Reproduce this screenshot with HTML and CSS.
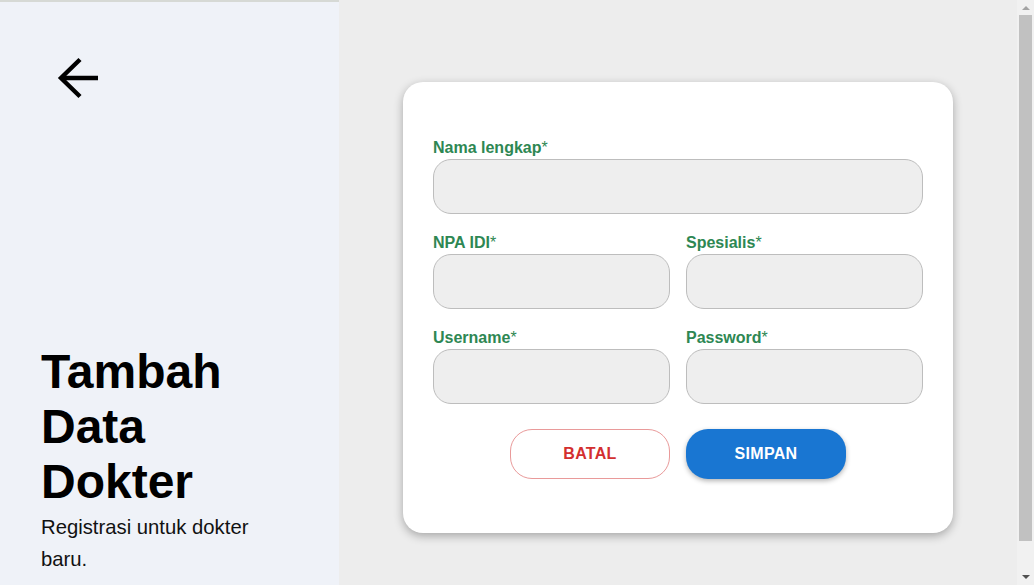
FILE: index.html
```html
<!DOCTYPE html>
<html lang="id">
<head>
<meta charset="utf-8">
<title>Tambah Data Dokter</title>
<link rel="stylesheet" href="styles.css">
</head>
<body>
<div class="page">
  <aside class="side">
    <button class="back" aria-label="Kembali">
      <svg width="44" height="42" viewBox="0 0 44 42" fill="none" stroke="#000" stroke-width="4.4" stroke-linejoin="miter">
        <path d="M42 21H5"/>
        <path d="M24 2.5L5 21L24 39.5"/>
      </svg>
    </button>
    <div class="intro">
      <h1 class="title">Tambah Data Dokter</h1>
      <p class="subtitle">Registrasi untuk dokter baru.</p>
    </div>
  </aside>
  <main class="main">
    <form class="card">
      <div class="grid">
        <div class="field wide">
          <label class="label">Nama lengkap<span class="req">*</span></label>
          <input class="input" type="text">
        </div>
        <div class="field">
          <label class="label">NPA IDI<span class="req">*</span></label>
          <input class="input" type="text">
        </div>
        <div class="field">
          <label class="label">Spesialis<span class="req">*</span></label>
          <input class="input" type="text">
        </div>
        <div class="field">
          <label class="label">Username<span class="req">*</span></label>
          <input class="input" type="text">
        </div>
        <div class="field">
          <label class="label">Password<span class="req">*</span></label>
          <input class="input" type="password">
        </div>
      </div>
      <div class="actions">
        <button type="button" class="btn btn-cancel">BATAL</button>
        <button type="button" class="btn btn-save">SIMPAN</button>
      </div>
    </form>
  </main>
  <div class="scrollbar">
    <div class="sb-up"><span class="tri-up"></span></div>
    <div class="sb-thumb"></div>
    <div class="sb-space"></div>
    <div class="sb-down"><span class="tri-down"></span></div>
  </div>
</div>
</body>
</html>
```

FILE: styles.css
```css
* { box-sizing: border-box; }
html, body { margin: 0; padding: 0; }
body {
  font-family: "Liberation Sans", Arial, sans-serif;
  color: #000;
  overflow: hidden;
}
.page {
  display: flex;
  height: 585px;
}
.side {
  width: 339px;
  flex: none;
  background: #eff2f8;
  border-top: 2px solid #d6d9d5;
  display: flex;
  flex-direction: column;
  justify-content: space-between;
  padding: 55px 40px 10px 41px;
}
.back {
  border: 0;
  background: none;
  padding: 0;
  margin-left: 15px;
  width: 44px;
  height: 42px;
  cursor: pointer;
}
.back svg { display: block; }
.intro { width: 240px; }
.title {
  margin: 0 0 2px;
  font-size: 48px;
  line-height: 55px;
  font-weight: 700;
}
.subtitle {
  margin: 0;
  font-size: 20.3px;
  line-height: 32px;
  color: #111;
}
.main {
  flex: 1;
  background: #ededed;
  display: flex;
  justify-content: center;
  align-items: flex-start;
  padding-top: 82px;
}
.card {
  width: 550px;
  background: #fff;
  border-radius: 20px;
  box-shadow: 0 3px 10px rgba(0, 0, 0, 0.3);
  padding: 55px 30px 54px;
}
.grid {
  display: grid;
  grid-template-columns: minmax(0, 1fr) minmax(0, 1fr);
  column-gap: 16px;
  row-gap: 18px;
}
.field { display: flex; flex-direction: column; min-width: 0; }
.field.wide { grid-column: 1 / 3; }
.label {
  font-size: 16px;
  line-height: 22px;
  font-weight: 700;
  color: #2e8753;
}
.req { font-weight: 400; }
.input {
  width: 100%;
  min-width: 0;
  height: 55px;
  border: 1px solid #bdbdbd;
  border-radius: 18px;
  background: #eeeeee;
  font: inherit;
  padding: 0 16px;
  outline: none;
}
.actions {
  display: flex;
  justify-content: center;
  gap: 16px;
  margin-top: 25px;
}
.btn {
  width: 160px;
  height: 50px;
  border-radius: 22px;
  font-family: "Liberation Sans", Arial, sans-serif;
  font-size: 16px;
  font-weight: 700;
  letter-spacing: 0.3px;
  cursor: pointer;
}
.btn-cancel {
  background: #fff;
  border: 1px solid #e99a9a;
  color: #d32f2f;
}
.btn-save {
  background: #1976d2;
  border: 0;
  color: #fff;
  box-shadow: 0 2px 5px rgba(0, 0, 0, 0.3);
}
.scrollbar {
  width: 17px;
  flex: none;
  background: #f1f1f1;
  display: flex;
  flex-direction: column;
  align-items: center;
}
.sb-up {
  height: 15px;
  width: 100%;
  display: flex;
  justify-content: center;
  align-items: center;
}
.tri-up {
  width: 0; height: 0;
  border-left: 4px solid transparent;
  border-right: 4px solid transparent;
  border-bottom: 4px solid #a3a3a3;
}
.sb-thumb {
  width: 13px;
  height: 526px;
  background: #c1c1c1;
}
.sb-space { flex: 1; }
.sb-down {
  height: 17px;
  width: 100%;
  display: flex;
  justify-content: center;
  align-items: center;
}
.tri-down {
  width: 0; height: 0;
  border-left: 4px solid transparent;
  border-right: 4px solid transparent;
  border-top: 4px solid #505050;
}
```
